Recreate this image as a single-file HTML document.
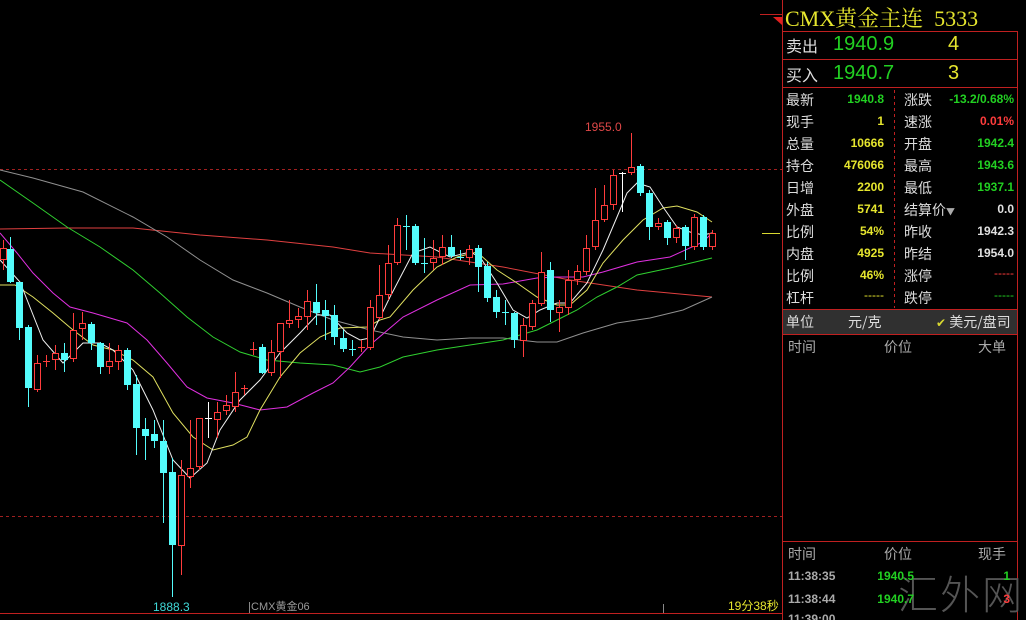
<!DOCTYPE html>
<html style="width:1026px;height:620px;overflow:hidden"><head><meta charset="utf-8"><style>
*{margin:0;padding:0;box-sizing:border-box}
body{width:1026px;height:620px;background:#000;overflow:hidden;position:relative;font-family:"Liberation Sans","Noto Sans CJK SC",sans-serif}
.a{position:absolute;white-space:nowrap}
.l{font-size:14px;color:#ddd;font-family:"Noto Sans CJK SC","WenQuanYi Zen Hei",sans-serif}
.v{font-size:12px;font-weight:bold;text-align:right}
.y{color:#e6e62e}.g{color:#22d022}.r{color:#ff3c3c}.w{color:#e0e0e0}
</style></head><body>
<svg class="a" style="left:0;top:0" width="1026" height="620">
<g stroke-width="1" shape-rendering="crispEdges">
<line x1="0" y1="169.5" x2="782" y2="169.5" stroke="#a02020" stroke-dasharray="3,3"/>
<line x1="0" y1="516.5" x2="782" y2="516.5" stroke="#a02020" stroke-dasharray="3,3"/>
<line x1="0" y1="613.5" x2="782" y2="613.5" stroke="#c02020"/>
<line x1="760" y1="14.5" x2="782" y2="14.5" stroke="#c02020"/>
<line x1="782.5" y1="0" x2="782.5" y2="620" stroke="#c02020"/>
<line x1="1017.5" y1="31" x2="1017.5" y2="620" stroke="#c02020"/>
<line x1="783" y1="31.5" x2="1018" y2="31.5" stroke="#c02020"/>
<line x1="783" y1="59.5" x2="1018" y2="59.5" stroke="#c02020"/>
<line x1="783" y1="87.5" x2="1018" y2="87.5" stroke="#c02020"/>
<line x1="894.5" y1="90" x2="894.5" y2="308" stroke="#c02020" stroke-dasharray="3,3"/>
<line x1="783" y1="309.5" x2="1018" y2="309.5" stroke="#c02020"/>
<rect x="783" y="310" width="234" height="24" fill="#303030"/>
<line x1="783" y1="334.5" x2="1018" y2="334.5" stroke="#c02020"/>
<line x1="783" y1="541.5" x2="1018" y2="541.5" stroke="#c02020"/>
<line x1="762" y1="233.5" x2="780" y2="233.5" stroke="#d8d830"/>
<line x1="249.5" y1="602" x2="249.5" y2="613" stroke="#888"/>
<line x1="663.5" y1="604" x2="663.5" y2="613" stroke="#888"/>
</g>
<polygon points="773,17 782,17 782,25" fill="#e02020"/>
<g fill="none" stroke-width="1">
<polyline stroke="#e04040" points="0,229 67,228 133,228 200,235 267,240 333,247 370,253 437,257 503,267 570,280 637,290 712,297"/>
<polyline stroke="#909090" points="0,170 33,178 83,192 133,217 167,237 200,260 233,280 267,293 300,307 333,320 370,330 403,337 437,340 470,338 503,338 537,342 557,342 583,333 617,323 650,318 683,310 712,297"/>
<polyline stroke="#30d030" points="0,180 33,203 67,227 100,247 133,270 160,293 187,317 213,337 240,352 267,360 300,363 333,365 360,372 380,367 403,357 437,350 470,345 503,340 537,330 557,320 577,310 597,297 617,287 637,275 670,268 712,258"/>
<polyline stroke="#e030e0" points="0,233 17,253 33,273 53,293 70,307 93,313 127,323 147,340 167,363 187,387 207,398 233,403 260,410 287,407 313,393 333,383 350,367 370,345 403,317 437,300 470,285 503,284 537,278 557,277 583,277 603,272 637,262 670,257 703,242 712,233"/>
<polyline stroke="#e0e060" points="0,285 15,285 33,297 53,313 73,330 93,345 113,350 133,360 153,377 173,413 193,437 213,450 233,445 247,437 260,410 280,377 300,353 320,337 340,328 367,327 380,320 390,317 413,290 437,267 457,257 477,252 497,270 517,283 537,297 557,305 570,305 587,290 603,263 623,240 643,220 663,208 677,206 697,212 712,222"/>
<polyline stroke="#f0f0f0" points="0,260 20,282 43,340 63,363 83,343 100,343 113,350 133,370 153,410 173,460 190,478 207,463 220,430 240,400 260,380 280,353 300,333 317,315 330,315 347,333 360,340 370,338 390,297 413,253 430,247 450,257 470,252 480,257 497,283 513,310 527,318 540,310 557,303 570,303 587,283 603,250 617,217 627,193 637,183 650,187 663,207 677,227 690,232 703,235 712,233"/>
</g>
<g id="c" shape-rendering="crispEdges"></g>
<text x="585" y="131" fill="#e04848" font-size="12" font-family="Liberation Sans">1955.0</text>
<text x="153" y="611" fill="#40d8d8" font-size="12" font-family="Liberation Sans">1888.3</text>
<text x="251" y="610" fill="#999" font-size="11" font-family="Liberation Sans,Noto Sans CJK SC">CMX黄金06</text>
<text x="728" y="610" fill="#e6e62e" font-size="12" font-family="Liberation Sans,Noto Sans CJK SC">19分38秒</text>
</svg>
<script>
var d=[[3,248,260,240,270,'r'],[10,249,282,237,283,'c'],[19,282,328,282,340,'c'],[28,327,388,325,407,'c'],[37,363,390,355,392,'r'],[46,361,362,355,367,'r'],[55,353,360,345,370,'r'],[64,353,360,343,372,'c'],[73,330,359,313,362,'r'],[82,323,329,312,340,'r'],[91,324,343,322,350,'c'],[100,343,367,342,374,'c'],[109,361,367,343,374,'r'],[118,350,362,345,370,'r'],[127,350,385,348,390,'c'],[136,384,428,375,455,'c'],[145,429,436,418,460,'c'],[154,434,441,420,448,'c'],[163,441,473,420,523,'c'],[172,472,545,458,597,'c'],[181,475,546,460,575,'r'],[190,468,477,420,488,'r'],[199,418,467,418,470,'r'],[208,418,419,402,438,'w'],[217,412,420,402,438,'r'],[226,405,411,395,415,'r'],[235,392,407,372,412,'r'],[244,388,390,385,395,'r'],[253,349,350,342,355,'r'],[262,347,373,344,374,'c'],[271,352,373,340,376,'r'],[280,323,352,323,378,'r'],[289,320,324,300,328,'r'],[298,316,320,308,328,'r'],[307,301,317,290,330,'r'],[316,302,313,284,325,'c'],[325,310,316,300,340,'c'],[334,315,337,305,345,'c'],[343,338,349,330,352,'c'],[352,349,350,340,356,'c'],[361,347,349,340,352,'r'],[370,307,348,300,350,'r'],[379,295,318,265,320,'r'],[388,263,295,245,300,'r'],[397,225,263,218,265,'r'],[406,226,227,215,250,'c'],[415,226,263,224,265,'c'],[424,263,264,238,273,'c'],[433,258,263,240,270,'r'],[442,247,257,235,265,'r'],[451,247,256,235,258,'c'],[460,257,258,250,260,'c'],[469,249,258,245,265,'r'],[478,248,267,245,292,'c'],[487,266,298,262,302,'c'],[496,297,312,290,318,'c'],[505,312,313,300,325,'c'],[514,313,340,312,348,'c'],[523,325,341,318,357,'r'],[532,303,327,300,330,'r'],[541,272,304,252,306,'r'],[550,270,310,262,322,'c'],[559,307,313,300,332,'r'],[568,280,308,270,315,'r'],[577,271,280,265,285,'r'],[586,248,272,235,275,'r'],[595,220,247,188,250,'r'],[604,205,220,185,222,'r'],[613,175,205,170,210,'r'],[622,173,174,172,212,'w'],[631,167,173,133,175,'r'],[640,166,193,164,196,'c'],[649,193,227,190,240,'c'],[658,223,227,218,230,'r'],[667,222,238,220,245,'c'],[676,228,238,225,243,'r'],[685,227,246,225,260,'c'],[694,217,247,214,250,'r'],[703,217,247,215,250,'c'],[712,233,247,230,250,'r']];
var s='',col={r:'#ff3c3c',c:'#54fcfc',w:'#ffffff'};
d.forEach(function(k){var x=k[0],c=col[k[5]];
s+='<line x1="'+(x+.5)+'" y1="'+k[3]+'" x2="'+(x+.5)+'" y2="'+k[4]+'" stroke="'+c+'"/>';
var h=Math.max(1,k[2]-k[1]);
if(k[5]=='c')s+='<rect x="'+(x-3)+'" y="'+k[1]+'" width="7" height="'+h+'" fill="'+c+'"/>';
else if(h<=2)s+='<line x1="'+(x-3)+'" y1="'+(k[1]+.5)+'" x2="'+(x+4)+'" y2="'+(k[1]+.5)+'" stroke="'+c+'"/>';
else s+='<rect x="'+(x-2.5)+'" y="'+(k[1]+.5)+'" width="6" height="'+(h-1)+'" fill="#000" stroke="'+c+'"/>';});
document.getElementById('c').innerHTML=s;
</script>
<div class="a y" style="left:785px;top:2px;font-size:22px;font-family:'Liberation Serif','Noto Serif CJK SC',serif">CMX黄金主连&nbsp; 5333</div>
<div class="a l" style="left:786px;top:33px;font-size:16px">卖出</div>
<div class="a g" style="left:833px;top:33px;font-size:20px">1940.9</div>
<div class="a y" style="left:948px;top:33px;font-size:20px">4</div>
<div class="a l" style="left:786px;top:62px;font-size:16px">买入</div>
<div class="a g" style="left:833px;top:62px;font-size:20px">1940.7</div>
<div class="a y" style="left:948px;top:62px;font-size:20px">3</div>
<div class="a" style="left:0;top:0">
<div class="a l" style="left:786px;top:90px">最新</div><div class="a v g" style="left:800px;width:84px;top:92px">1940.8</div>
<div class="a l" style="left:904px;top:90px">涨跌</div><div class="a v g" style="left:920px;width:94px;top:92px">-13.2/0.68%</div>
<div class="a l" style="left:786px;top:112px">现手</div><div class="a v y" style="left:800px;width:84px;top:114px">1</div>
<div class="a l" style="left:904px;top:112px">速涨</div><div class="a v r" style="left:920px;width:94px;top:114px">0.01%</div>
<div class="a l" style="left:786px;top:134px">总量</div><div class="a v y" style="left:800px;width:84px;top:136px">10666</div>
<div class="a l" style="left:904px;top:134px">开盘</div><div class="a v g" style="left:920px;width:94px;top:136px">1942.4</div>
<div class="a l" style="left:786px;top:156px">持仓</div><div class="a v y" style="left:800px;width:84px;top:158px">476066</div>
<div class="a l" style="left:904px;top:156px">最高</div><div class="a v g" style="left:920px;width:94px;top:158px">1943.6</div>
<div class="a l" style="left:786px;top:178px">日增</div><div class="a v y" style="left:800px;width:84px;top:180px">2200</div>
<div class="a l" style="left:904px;top:178px">最低</div><div class="a v g" style="left:920px;width:94px;top:180px">1937.1</div>
<div class="a l" style="left:786px;top:200px">外盘</div><div class="a v y" style="left:800px;width:84px;top:202px">5741</div>
<div class="a l" style="left:904px;top:200px">结算价<span style="font-size:9px;color:#aaa">▼</span></div><div class="a v w" style="left:920px;width:94px;top:202px">0.0</div>
<div class="a l" style="left:786px;top:222px">比例</div><div class="a v y" style="left:800px;width:84px;top:224px">54%</div>
<div class="a l" style="left:904px;top:222px">昨收</div><div class="a v w" style="left:920px;width:94px;top:224px">1942.3</div>
<div class="a l" style="left:786px;top:244px">内盘</div><div class="a v y" style="left:800px;width:84px;top:246px">4925</div>
<div class="a l" style="left:904px;top:244px">昨结</div><div class="a v w" style="left:920px;width:94px;top:246px">1954.0</div>
<div class="a l" style="left:786px;top:266px">比例</div><div class="a v y" style="left:800px;width:84px;top:268px">46%</div>
<div class="a l" style="left:904px;top:266px">涨停</div><div class="a v r" style="left:920px;width:94px;top:266px;font-weight:normal">-----</div>
<div class="a l" style="left:786px;top:288px">杠杆</div><div class="a v y" style="left:800px;width:84px;top:288px;font-weight:normal">-----</div>
<div class="a l" style="left:904px;top:288px">跌停</div><div class="a v g" style="left:920px;width:94px;top:288px;font-weight:normal">-----</div>
</div>
<div class="a l" style="left:786px;top:312px">单位</div>
<div class="a l" style="left:848px;top:312px">元/克</div>
<div class="a l" style="left:936px;top:312px"><span style="color:#d8d830;font-size:12px">✔</span> 美元/盘司</div>
<div class="a l" style="left:788px;top:337px;color:#aaa">时间</div>
<div class="a l" style="left:884px;top:337px;color:#aaa">价位</div>
<div class="a l" style="left:978px;top:337px;color:#aaa">大单</div>
<div class="a l" style="left:788px;top:544px;color:#aaa">时间</div>
<div class="a l" style="left:884px;top:544px;color:#aaa">价位</div>
<div class="a l" style="left:978px;top:544px;color:#aaa">现手</div>
<div class="a" style="left:898px;top:568px;font-size:40px;line-height:48px;color:#555;font-family:'Noto Sans CJK SC',sans-serif;font-weight:300;letter-spacing:2px">汇外网</div>
<div class="a v" style="left:788px;top:569px;color:#aaa;text-align:left">11:38:35</div>
<div class="a v g" style="left:850px;width:64px;top:569px">1940.5</div>
<div class="a v g" style="left:950px;width:60px;top:569px">1</div>
<div class="a v" style="left:788px;top:592px;color:#aaa;text-align:left">11:38:44</div>
<div class="a v g" style="left:850px;width:64px;top:592px">1940.7</div>
<div class="a v r" style="left:950px;width:60px;top:592px">3</div>
<div class="a v" style="left:788px;top:612px;color:#aaa;text-align:left;height:8px;overflow:hidden;line-height:14px">11:39:00</div>
</body></html>
